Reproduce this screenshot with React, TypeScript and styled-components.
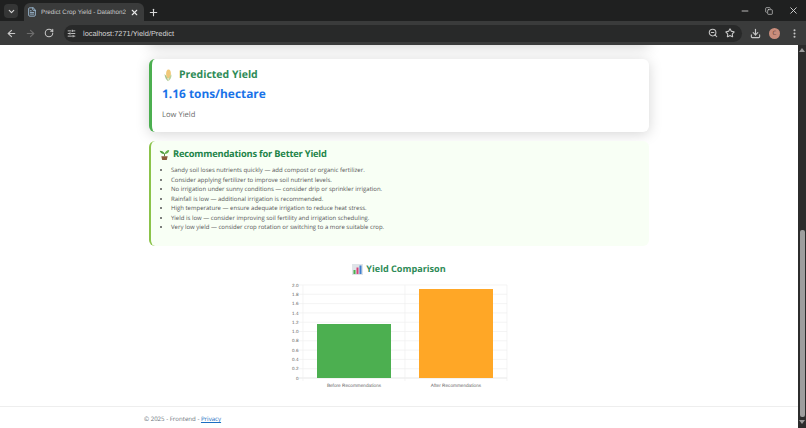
import styled, { createGlobalStyle } from "styled-components";
import { ArrowLeft, ArrowRight, RotateCw, Star, ZoomOut, Download, EllipsisVertical, SlidersHorizontal, X, Plus, ChevronDown, Minus, Copy, FileText } from "lucide-react";

const recommendations = [
  "Sandy soil loses nutrients quickly — add compost or organic fertilizer.",
  "Consider applying fertilizer to improve soil nutrient levels.",
  "No irrigation under sunny conditions — consider drip or sprinkler irrigation.",
  "Rainfall is low — additional irrigation is recommended.",
  "High temperature — ensure adequate irrigation to reduce heat stress.",
  "Yield is low — consider improving soil fertility and irrigation scheduling.",
  "Very low yield — consider crop rotation or switching to a more suitable crop.",
];

const ticks = ["0", "0.2", "0.4", "0.6", "0.8", "1.0", "1.2", "1.4", "1.6", "1.8", "2.0"];

const CornIcon = () => (
  <svg width="12" height="13" viewBox="0 0 12 13">
    <ellipse cx="6.5" cy="5" rx="2.4" ry="4.6" fill="#f0c878" />
    <path d="M2.5 5c.4 3.500 1.600 6 3.600 7.200-.3-3-1.400-5.400-3.600-7.200z" fill="#a9c48c" />
    <path d="M9.500 5.500c0 3.200-1 5.500-3.400 6.700.3-2.800 1.400-5 3.400-6.700z" fill="#bcd39c" />
  </svg>
);

const SproutIcon = () => (
  <svg width="11" height="13" viewBox="0 0 12 13">
    <path d="M6 6C5.500 3.800 3.500 2.500.8 2.500 1.200 4.800 3.200 6.200 6 6z" fill="#4f9d3f" />
    <path d="M6 6c.5-2.800 2.500-4.300 5.200-4.500C11 4.200 9 6 6 6z" fill="#66b04d" />
    <rect x="5.500" y="5.500" width="1" height="3" fill="#4f7d35" />
    <path d="M2.500 8.500h7L8.500 12.500h-5z" fill="#8a5a3c" />
  </svg>
);

const ChartIcon = () => (
  <svg width="11" height="11" viewBox="0 0 11 11">
    <rect width="11" height="11" fill="#dfe4e8" />
    <rect x="1.500" y="6" width="2" height="4" fill="#4caf50" />
    <rect x="4.500" y="3.500" width="2" height="6.500" fill="#d8437a" />
    <rect x="7.500" y="1.500" width="2" height="8.500" fill="#3f7fd0" />
  </svg>
);

const YieldChart = () => {
  const left = 303;
  const right = 507;
  const top = 285;
  const bottom = 378;
  const mid = (left + right) / 2;
  return (
    <ChartSvg width="806" height="116" viewBox="0 283 806 116">
      {ticks.map((t, i) => {
        const y = bottom - (i * (bottom - top)) / 10;
        return (
          <g key={t}>
            <line x1={left - 4} x2={right} y1={y} y2={y} stroke={i === 0 ? "#dddddd" : "#efefef"} strokeWidth="0.7" />
            <text x={left - 4.500} y={y + 1.600} fontSize="4.600" fill="#666" textAnchor="end">
              {t}
            </text>
          </g>
        );
      })}
      {[left, mid, right].map((x) => (
        <line key={x} x1={x} x2={x} y1={top} y2={bottom + 3} stroke="#efefef" strokeWidth="0.7" />
      ))}
      <rect x="317" y="324" width="74" height="54" fill="#4caf50" />
      <rect x="419" y="289" width="74" height="89" fill="#ffa726" />
      <text x="354" y="387" fontSize="4.700" fill="#666" textAnchor="middle">
        Before Recommendations
      </text>
      <text x="456" y="387" fontSize="4.700" fill="#666" textAnchor="middle">
        After Recommendations
      </text>
    </ChartSvg>
  );
};

const App = (): JSX.Element => {
  return (
    <>
      <GlobalStyle />
      <Window>
        <TabStrip>
          <TabMenu>
            <ChevronDown size={9} strokeWidth={3} />
          </TabMenu>
          <Tab>
            <FileText size={10} color="#a9cbe8" />
            <TabTitle>Predict Crop Yield - Datathon2</TabTitle>
            <X size={9} strokeWidth={3} color="#e8e8e8" />
          </Tab>
          <NewTab>
            <Plus size={11} strokeWidth={2.500} />
          </NewTab>
          <WindowControls>
            <Minus size={10} />
            <Copy size={8} />
            <X size={11} />
          </WindowControls>
        </TabStrip>
        <Toolbar>
          <ArrowLeft size={11} strokeWidth={2.500} color="#c7c7c7" />
          <ArrowRight size={11} strokeWidth={2.500} color="#6d6d6d" />
          <RotateCw size={10} strokeWidth={2.500} color="#c7c7c7" />
          <AddressBar>
            <SlidersHorizontal size={9} strokeWidth={2.500} color="#c7c7c7" />
            <Url>localhost:7271/Yield/Predict</Url>
            <ZoomOut size={10} strokeWidth={2.500} color="#c7c7c7" />
            <Star size={10} strokeWidth={2.500} color="#c7c7c7" />
          </AddressBar>
          <Download size={11} strokeWidth={2.500} color="#c7c7c7" />
          <Avatar>C</Avatar>
          <MenuDots>
            <EllipsisVertical size={11} strokeWidth={2.500} color="#c7c7c7" />
          </MenuDots>
        </Toolbar>
        <Viewport>
          <Page>
            <Main>
              <PreviousCard />
              <ResultCard>
                <ResultTitle>
                  <CornIcon /> Predicted Yield
                </ResultTitle>
                <YieldValue>1.16 tons/hectare</YieldValue>
                <YieldLabel>Low Yield</YieldLabel>
              </ResultCard>
              <RecommendCard>
                <RecommendTitle>
                  <SproutIcon /> Recommendations for Better Yield
                </RecommendTitle>
                <RecommendList>
                  {recommendations.map((r) => (
                    <li key={r}>{r}</li>
                  ))}
                </RecommendList>
              </RecommendCard>
              <ChartTitle>
                <ChartIcon /> Yield Comparison
              </ChartTitle>
              <YieldChart />
            </Main>
            <Footer>
              © 2025 - Frontend - <FooterLink href="#">Privacy</FooterLink>
            </Footer>
          </Page>
          <Scrollbar>
            <ScrollArrow />
            <ScrollThumb />
            <ScrollArrowDown />
          </Scrollbar>
        </Viewport>
      </Window>
    </>
  );
};

const GlobalStyle = createGlobalStyle`
  html, body {
    margin: 0;
    padding: 0;
    overflow: hidden;
  }
  * {
    box-sizing: border-box;
  }
`;
const Window = styled.div`
  width: 806px;
  height: 428px;
  display: flex;
  flex-direction: column;
  overflow: hidden;
  font-family: "Open Sans", "Liberation Sans", sans-serif;
  text-rendering: geometricPrecision;
  background: #fff;
`;
const TabStrip = styled.div`
  height: 21px;
  flex: none;
  display: flex;
  align-items: flex-end;
  padding-left: 4px;
  background: #1f2020;
  color: #d8d8d8;
`;
const TabMenu = styled.div`
  width: 14px;
  height: 14px;
  margin-bottom: 3px;
  display: flex;
  align-items: center;
  justify-content: center;
  border-radius: 4px;
  background: #353636;
`;
const Tab = styled.div`
  width: 120px;
  height: 18px;
  margin-left: 6px;
  padding: 0 5px 0 3px;
  display: flex;
  align-items: center;
  gap: 4px;
  border-radius: 6px 6px 0 0;
  background: #3a3b3b;
`;
const TabTitle = styled.span`
  flex: 1;
  overflow: hidden;
  white-space: nowrap;
  font-family: "Liberation Sans", sans-serif;
  font-size: 6.300px;
  color: #c8c8c8;
`;
const NewTab = styled.div`
  width: 20px;
  height: 18px;
  margin-left: -1px;
  display: flex;
  align-items: center;
  justify-content: center;
`;
const WindowControls = styled.div`
  margin-left: auto;
  height: 21px;
  width: 74px;
  display: flex;
  align-items: center;
  justify-content: space-between;
  padding-left: 8px;
  padding-right: 7px;
`;
const Toolbar = styled.div`
  height: 24px;
  flex: none;
  display: flex;
  align-items: center;
  gap: 8px;
  padding: 0 6px;
  background: #3a3b3b;
`;
const AddressBar = styled.div`
  width: 678px;
  height: 17px;
  margin-left: 2px;
  padding: 0 7px 0 3px;
  display: flex;
  align-items: center;
  gap: 7px;
  border-radius: 9px;
  background: #282929;
`;
const Url = styled.span`
  flex: 1;
  font-family: "Liberation Sans", sans-serif;
  font-size: 7.400px;
  color: #d4d4d4;
`;
const Avatar = styled.div`
  width: 11px;
  height: 11px;
  border-radius: 50%;
  display: flex;
  align-items: center;
  justify-content: center;
  font-size: 6px;
  color: #5b3a30;
  background: #c98d7c;
`;
const MenuDots = styled.div`
  display: flex;
  margin-left: 1px;
`;
const Viewport = styled.div`
  flex: 1;
  min-height: 0;
  display: flex;
`;
const Page = styled.div`
  flex: 1;
  min-width: 0;
  display: flex;
  flex-direction: column;
  overflow: hidden;
`;
const Main = styled.main`
  width: 500px;
  margin-left: 149px;
`;
/* bottom of the card scrolled off above the fold, only its shadow shows */
const PreviousCard = styled.div`
  height: 20px;
  margin: -20px 0 14px;
  box-shadow: 0 2px 14px rgba(0, 0, 0, 0.17);
`;
const ResultCard = styled.section`
  height: 73px;
  padding: 9px 10px 8px;
  border-left: 3px solid #4caf50;
  border-radius: 6px;
  background: #fff;
  box-shadow: 0 2px 14px rgba(0, 0, 0, 0.17);
`;
const ResultTitle = styled.h3`
  margin: 0;
  display: flex;
  align-items: center;
  gap: 5px;
  font-size: 10.500px;
  font-weight: 700;
  line-height: 15px;
  color: #2e8b57;
`;
const YieldValue = styled.div`
  margin-top: 3px;
  font-size: 11.900px;
  font-weight: 700;
  line-height: 17px;
  color: #1a73e8;
`;
const YieldLabel = styled.div`
  margin-top: 7px;
  font-size: 7.600px;
  line-height: 10px;
  color: #6c6c6c;
`;
const RecommendCard = styled.section`
  height: 105px;
  margin-top: 9px;
  padding: 6px 8px;
  border-left: 2px solid #8bc34a;
  border-radius: 6px;
  background: #f8fff5;
`;
const RecommendTitle = styled.h4`
  margin: 0;
  display: flex;
  align-items: center;
  gap: 3px;
  font-size: 9.300px;
  font-weight: 700;
  letter-spacing: -0.2px;
  line-height: 14px;
  color: #1e8449;
`;
const RecommendList = styled.ul`
  margin: 5px 0 0;
  padding-left: 12px;
  font-size: 6px;
  line-height: 9.500px;
  color: #555;
`;
const ChartTitle = styled.h4`
  margin: 16px 0 0;
  display: flex;
  align-items: center;
  justify-content: center;
  gap: 3px;
  font-size: 9.100px;
  font-weight: 700;
  line-height: 14px;
  color: #2e8b57;
`;
const ChartSvg = styled.svg`
  display: block;
  margin: 7px 0 0 -149px;
  font-family: "Liberation Sans", sans-serif;
`;
const Footer = styled.footer`
  margin-top: auto;
  height: 22px;
  padding: 7px 0 0 144px;
  border-top: 1px solid #eeeeee;
  font-size: 6.100px;
  color: #6c757d;
`;
const FooterLink = styled.a`
  color: #1b6ec2;
`;
const Scrollbar = styled.div`
  width: 8px;
  flex: none;
  display: flex;
  flex-direction: column;
  background: #2c2c2c;
`;
const ScrollArrow = styled.div`
  flex: none;
  margin: 3px auto 0;
  width: 0;
  height: 0;
  border-left: 3px solid transparent;
  border-right: 3px solid transparent;
  border-bottom: 4px solid #9a9a9a;
`;
const ScrollThumb = styled.div`
  width: 5px;
  height: 187px;
  margin: 178px auto 0;
  border-radius: 2px;
  background: #9e9e9e;
`;
const ScrollArrowDown = styled.div`
  width: 0;
  height: 0;
  margin: 3px auto 0;
  border-left: 3px solid transparent;
  border-right: 3px solid transparent;
  border-top: 4px solid #9a9a9a;
`;

export default App;
